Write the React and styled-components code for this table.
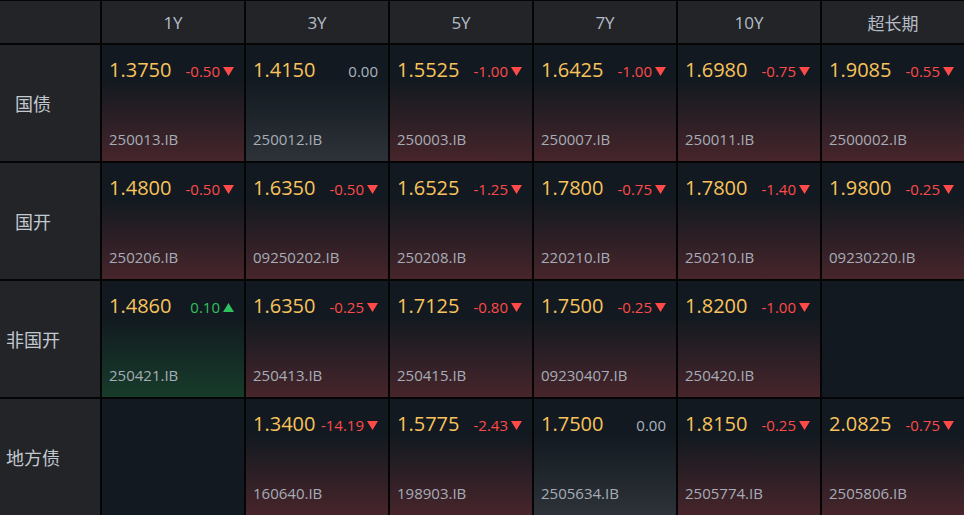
import React from "react";
import styled, { createGlobalStyle, css } from "styled-components";

const Global = createGlobalStyle`
  html, body { margin: 0; padding: 0; background: #000; }
  body { font-family: "Open Sans", "Noto Sans CJK SC", sans-serif; }
`;

const Board = styled.div`
  display: grid;
  grid-template-columns: 100px repeat(6, 142px);
  grid-template-rows: 42px repeat(4, 116px);
  gap: 2px;
  padding-top: 1px;
  width: 964px;
  height: 515px;
  box-sizing: border-box;
  background: #050505;
  overflow: hidden;
`;

const Corner = styled.div`
  background: #232428;
`;

const HeadCell = styled.div`
  background: #232428;
  color: #b4bcc6;
  font-size: 17px;
  display: flex;
  align-items: center;
  justify-content: center;
`;

const RowLabel = styled.div`
  background: #232428;
  color: #c2c8d0;
  font-size: 18px;
  display: flex;
  align-items: center;
  justify-content: center;
  padding-right: 34px;
`;

const tones = {
  down: "#47252b",
  flat: "#2d3338",
  up: "#173c2a",
};

const Cell = styled.div`
  display: flex;
  flex-direction: column;
  justify-content: space-between;
  padding: 13px 10px 13px 7px;
  box-sizing: border-box;
  ${(p) =>
    p.$tone
      ? css`
          background: linear-gradient(to bottom, #121920 30%, ${tones[p.$tone]} 100%);
        `
      : css`
          background: #121920;
        `}
`;

const Top = styled.div`
  display: flex;
  align-items: baseline;
  justify-content: space-between;
`;

const Value = styled.span`
  color: #f8c35c;
  font-size: 20px;
  line-height: 24px;
`;

const Change = styled.span`
  display: flex;
  align-items: center;
  gap: 3px;
  font-size: 15px;
  line-height: 18px;
  color: ${(p) => (p.$tone === "down" ? "#ff4a4a" : p.$tone === "up" ? "#2fc15e" : "#a9b4c0")};
`;

const Code = styled.span`
  color: #a6adb6;
  font-size: 15px;
  line-height: 18px;
`;

function Arrow({ up }) {
  return (
    <svg width="11" height="9" viewBox="0 0 11 9">
      <path d={up ? "M5.5 0 L11 9 L0 9 Z" : "M0 0 L11 0 L5.5 9 Z"} fill={up ? "#2fc15e" : "#ff4a4a"} />
    </svg>
  );
}

const headers = ["1Y", "3Y", "5Y", "7Y", "10Y", "超长期"];

const rows = [
  {
    label: "国债",
    cells: [
      ["1.3750", "-0.50", "250013.IB"],
      ["1.4150", "0.00", "250012.IB"],
      ["1.5525", "-1.00", "250003.IB"],
      ["1.6425", "-1.00", "250007.IB"],
      ["1.6980", "-0.75", "250011.IB"],
      ["1.9085", "-0.55", "2500002.IB"],
    ],
  },
  {
    label: "国开",
    cells: [
      ["1.4800", "-0.50", "250206.IB"],
      ["1.6350", "-0.50", "09250202.IB"],
      ["1.6525", "-1.25", "250208.IB"],
      ["1.7800", "-0.75", "220210.IB"],
      ["1.7800", "-1.40", "250210.IB"],
      ["1.9800", "-0.25", "09230220.IB"],
    ],
  },
  {
    label: "非国开",
    cells: [
      ["1.4860", "0.10", "250421.IB"],
      ["1.6350", "-0.25", "250413.IB"],
      ["1.7125", "-0.80", "250415.IB"],
      ["1.7500", "-0.25", "09230407.IB"],
      ["1.8200", "-1.00", "250420.IB"],
      null,
    ],
  },
  {
    label: "地方债",
    cells: [
      null,
      ["1.3400", "-14.19", "160640.IB"],
      ["1.5775", "-2.43", "198903.IB"],
      ["1.7500", "0.00", "2505634.IB"],
      ["1.8150", "-0.25", "2505774.IB"],
      ["2.0825", "-0.75", "2505806.IB"],
    ],
  },
];

function toneOf(chg) {
  if (chg.startsWith("-")) return "down";
  if (chg === "0.00") return "flat";
  return "up";
}

function QuoteCell({ data }) {
  if (!data) return <Cell />;
  const [val, chg, code] = data;
  const tone = toneOf(chg);
  return (
    <Cell $tone={tone}>
      <Top>
        <Value>{val}</Value>
        <Change $tone={tone}>
          {chg}
          {tone !== "flat" && <Arrow up={tone === "up"} />}
        </Change>
      </Top>
      <Code>{code}</Code>
    </Cell>
  );
}

export default function App() {
  return (
    <>
      <Global />
      <Board>
        <Corner />
        {headers.map((h) => (
          <HeadCell key={h}>{h}</HeadCell>
        ))}
        {rows.map((r) => (
          <React.Fragment key={r.label}>
            <RowLabel>{r.label}</RowLabel>
            {r.cells.map((c, i) => (
              <QuoteCell key={i} data={c} />
            ))}
          </React.Fragment>
        ))}
      </Board>
    </>
  );
}
